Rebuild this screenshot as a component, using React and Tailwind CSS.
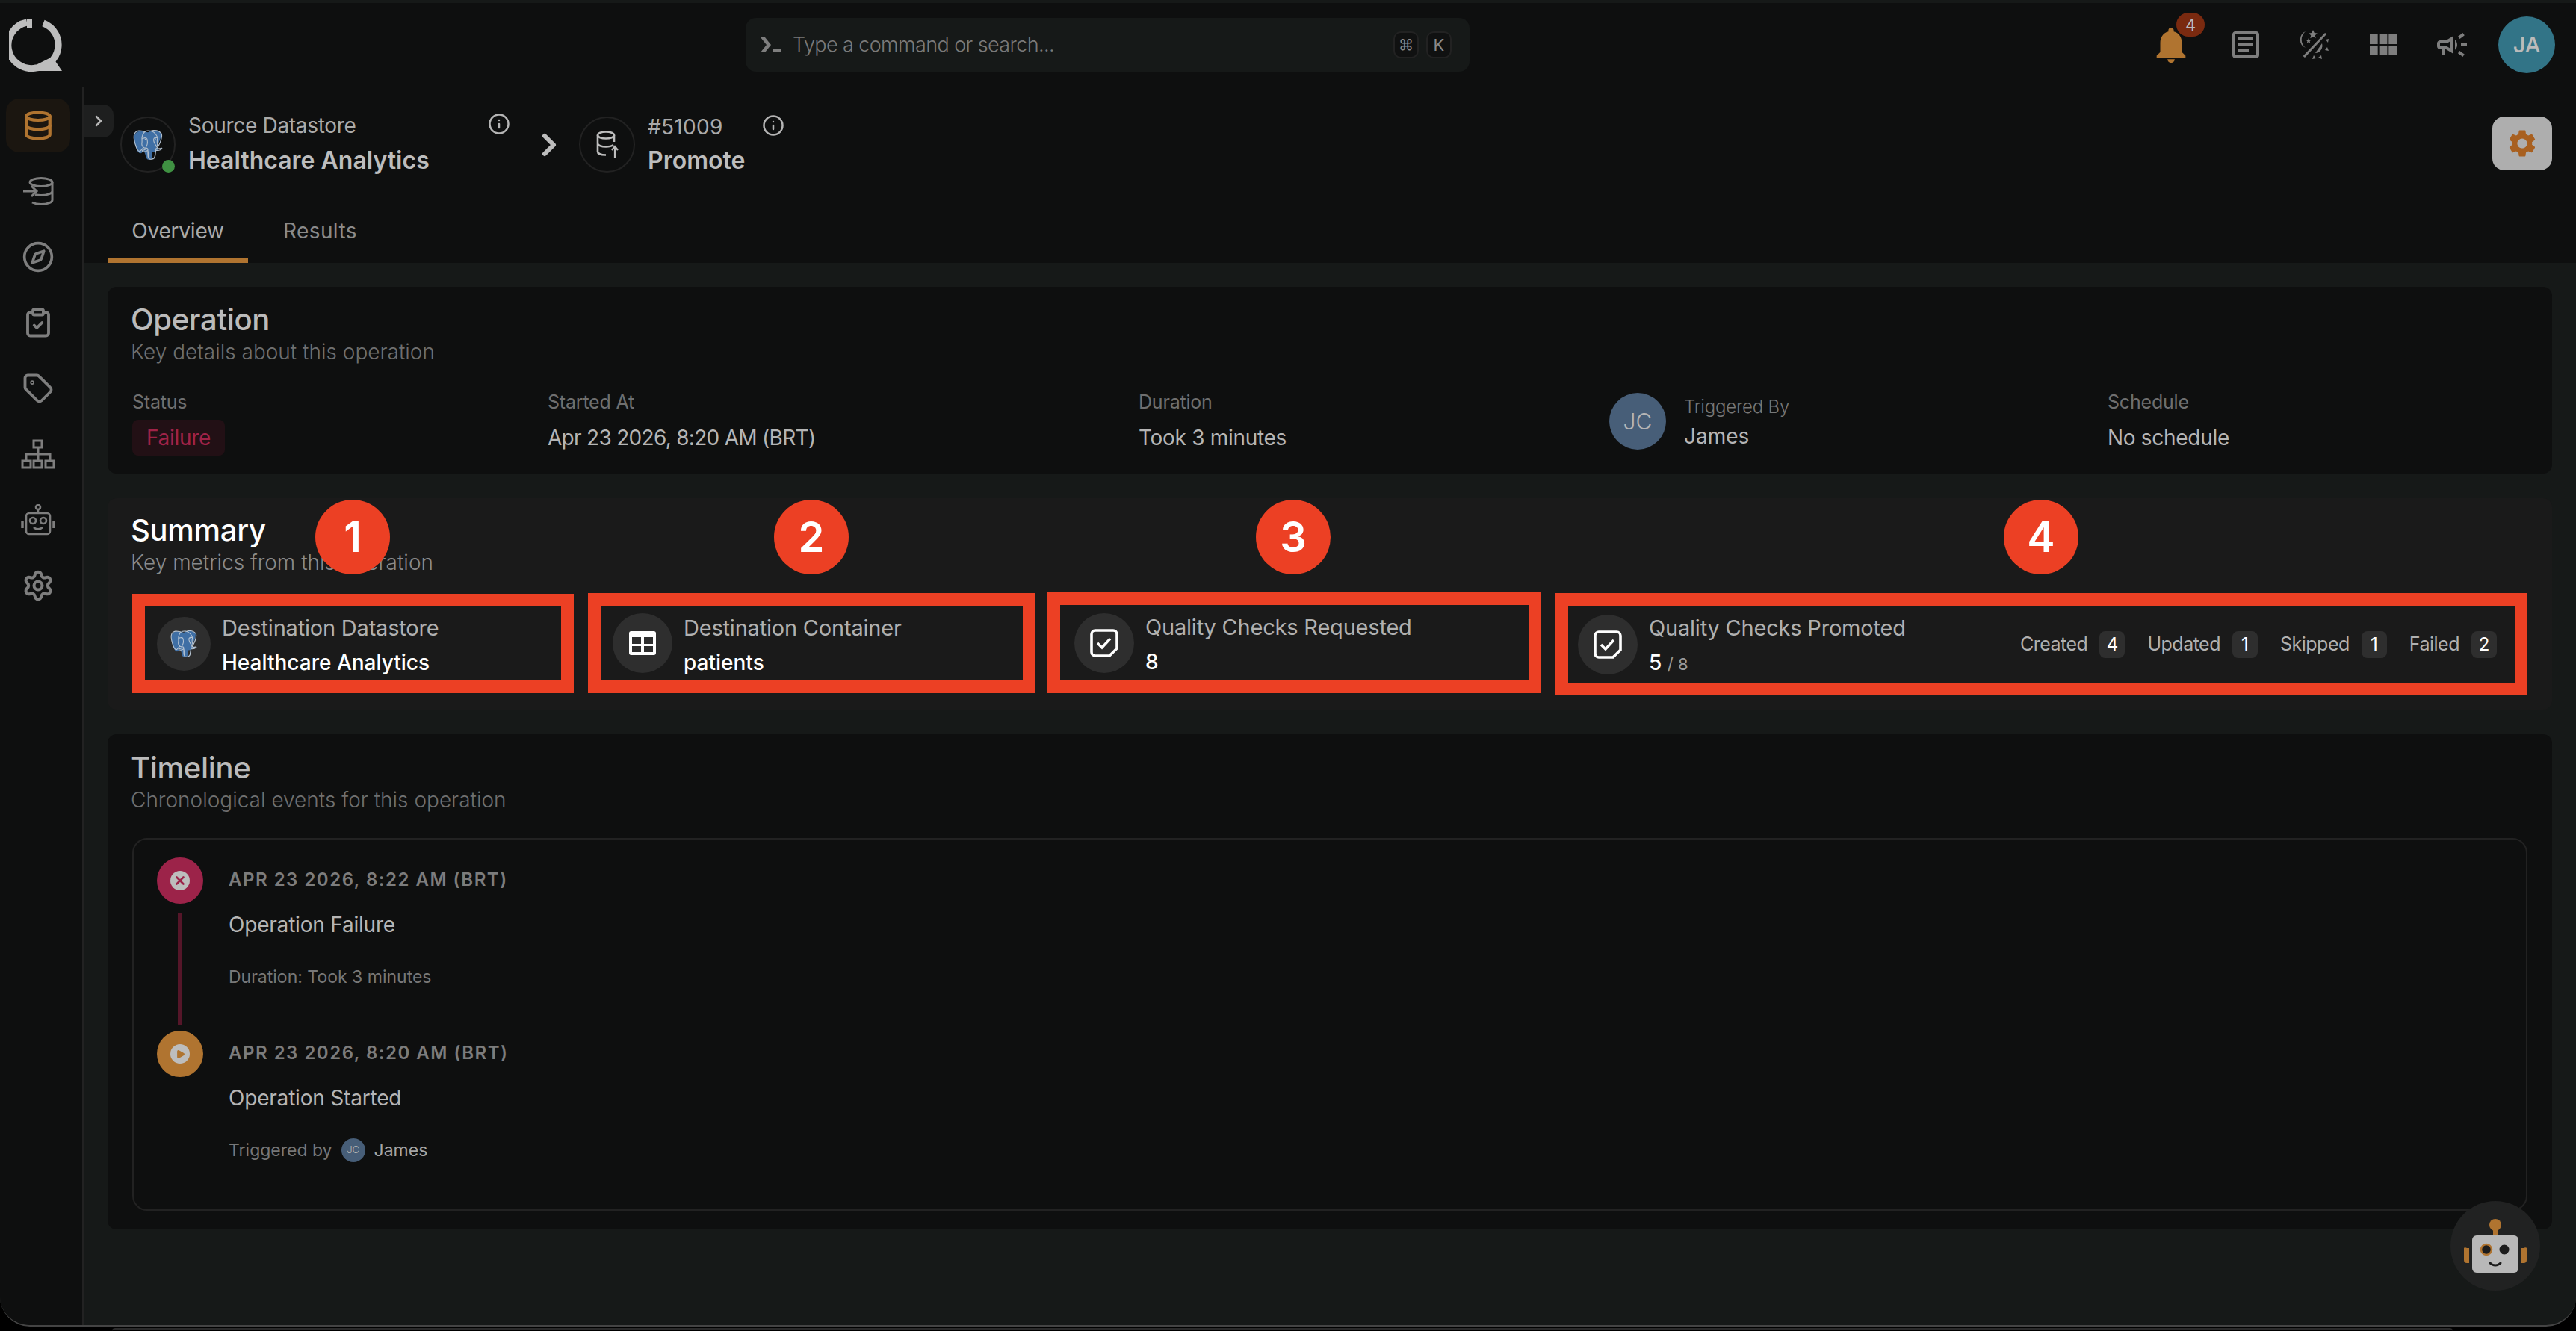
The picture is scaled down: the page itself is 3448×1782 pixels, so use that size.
import { Database, Compass, ClipboardCheck, Tag, Settings, Info, ChevronRight, X, Play } from 'lucide-react'
import { MdNotifications, MdOutlineArticle, MdViewModule, MdOutlineCampaign, MdSettings } from 'react-icons/md'
import { SiPostgresql } from 'react-icons/si'

function QLogo() {
  return (
    <svg width="72" height="72" viewBox="0 0 72 72" fill="none">
      <path d="M24 6 A31 31 0 0 0 36 67 A31 31 0 0 0 46 7" stroke="#bdbdbd" strokeWidth="9" />
      <path d="M24 2 L31 2 L31 13 L24 13Z" fill="#bdbdbd" />
      <path d="M38 62 L58 52 L71 71 L38 71Z" fill="#bdbdbd" />
    </svg>
  )
}

function PgIcon({ size, line }) {
  return (
    <div className="relative" style={{ width: size, height: size }}>
      <svg width={size} height={size} viewBox="0 0 24 24" fill="#3f6fa5">
        <path d="M6 1C2 1 .5 4 1 8c.5 4 2 9 4 10.500 1.500 1 2.500-.5 3.500-2 .5 1 1 2 1.500 3.500.5 3 1.500 4 3 4s2.500-1 2.500-3v-3.500c2 .5 4-.5 5-2 0-1-1-1.500-2-1.500 2-3 4-7 4-10C23 2 20 .5 17 .5c-2 0-3.500.5-5 1.500C10.500 1.300 8 1 6 1z" />
      </svg>
      <SiPostgresql size={size} color={line} className="absolute inset-0" />
    </div>
  )
}

function DbIn() {
  return (
    <svg width="42" height="40" viewBox="0 0 42 40" fill="none" stroke="#7e7e7e" strokeWidth="3">
      <ellipse cx="25" cy="8" rx="15" ry="5.5" />
      <path d="M40 8v24c0 3-7 5.5-15 5.5-5 0-9-1-12-2.5M40 20c0 3-7 5.5-15 5.5-3 0-6-.4-8-1" />
      <path d="M1 20h18M12 13l7 7-7 7" />
    </svg>
  )
}

function DbUp() {
  return (
    <svg width="32" height="40" viewBox="0 0 32 40" fill="none" stroke="#bdbdbd" strokeWidth="2.6">
      <ellipse cx="14" cy="7" rx="11" ry="4.5" />
      <path d="M3 7v22c0 2.500 4 4.500 11 4.500M25 7v9M3 18c0 2.500 5 4.500 11 4.500 4 0 8-1 10-2.500" />
      <path d="M26 37V23M22 27l4-5 4 5" strokeWidth="2.200" />
    </svg>
  )
}

function Hierarchy() {
  return (
    <svg width="46" height="40" viewBox="0 0 46 40" fill="none" stroke="#7e7e7e" strokeWidth="3">
      <rect x="17" y="2" width="11" height="9" />
      <rect x="2" y="29" width="11" height="9" />
      <rect x="17" y="29" width="11" height="9" />
      <rect x="33" y="29" width="11" height="9" />
      <path d="M23 11v18M7 29v-9h32v9" />
    </svg>
  )
}

function NavBot() {
  return (
    <svg width="46" height="42" viewBox="0 0 46 42" fill="none" stroke="#7e7e7e" strokeWidth="2.600">
      <circle cx="23" cy="4" r="3" />
      <path d="M23 7v5" />
      <rect x="7" y="12" width="32" height="28" rx="4" />
      <path d="M2 22v10M44 22v10" strokeWidth="3.500" />
      <circle cx="16" cy="22" r="4" />
      <circle cx="30" cy="22" r="4" />
      <path d="M17 31c3 3 9 3 12 0" />
    </svg>
  )
}

function MoonSun() {
  return (
    <svg width="42" height="42" viewBox="0 0 42 42" fill="#7e7e7e">
      <path d="M9 3 A12 12 0 0 0 9 25 A14 14 0 0 1 9 3Z" />
      <path d="M19 1l1.800 4 4 .4-3 2.800.9 4-3.700-2.100-3.700 2.100.9-4-3-2.800 4-.4z" />
      <path d="M13 12l1 2.400 2.400.2-1.800 1.600.6 2.400-2.200-1.300-2.200 1.300.6-2.400-1.800-1.600 2.400-.2z" />
      <path d="M35 5l2.400 1.600L8 38l-2.400-2z" />
      <path d="M31 19 A10 10 0 0 1 22 32 L31 19Z" />
      <path d="M36 14l4-1-1 5zM40 29l-5-1 3-4zM31 40l-1-5-4 3zM18 40l2-5 3 4z" />
    </svg>
  )
}

function TableIcon() {
  return (
    <svg width="36" height="32" viewBox="0 0 36 32">
      <rect width="36" height="32" rx="3" fill="#fff" />
      <rect x="4" y="8" width="12" height="9" fill="#2e2e2e" />
      <rect x="20" y="8" width="12" height="9" fill="#2e2e2e" />
      <rect x="4" y="20" width="12" height="8" fill="#2e2e2e" />
      <rect x="20" y="20" width="12" height="8" fill="#2e2e2e" />
    </svg>
  )
}

function CheckNote() {
  return (
    <svg width="40" height="40" viewBox="0 0 40 40" fill="none" stroke="#fff" strokeWidth="3.600">
      <path d="M27 37H8a5 5 0 0 1-5-5V8a5 5 0 0 1 5-5h24a5 5 0 0 1 5 5v19z" />
      <path d="M11 20l6 6 11-12" strokeWidth="3.400" />
    </svg>
  )
}

function RobotFab() {
  return (
    <div className="absolute left-[3280px] top-[1608px] w-[120px] h-[120px] rounded-full bg-[#212222] flex items-center justify-center">
      <svg width="84" height="72" viewBox="0 0 84 72">
        <circle cx="42" cy="8" r="8" fill="#b07430" />
        <rect x="39" y="12" width="6" height="10" fill="#b07430" />
        <rect x="11" y="22" width="62" height="50" rx="6" fill="#b8b8b8" />
        <path d="M0 46a4 4 0 0 1 4-7h3v20H4a4 4 0 0 1-4-4z" fill="#b07430" />
        <path d="M84 46a4 4 0 0 0-4-7h-3v20h3a4 4 0 0 0 4-4z" fill="#b07430" />
        <circle cx="30" cy="41" r="7" fill="#1c1c1c" stroke="#b07430" strokeWidth="2.500" />
        <circle cx="54" cy="41" r="6.500" fill="#1c1c1c" />
        <path d="M35 59c4 4 10 4 14 0" fill="none" stroke="#1c1c1c" strokeWidth="3" strokeLinecap="round" />
      </svg>
    </div>
  )
}

function StepBadge({ n, x }) {
  return (
    <div className={`absolute top-[669px] w-[100px] h-[100px] rounded-full bg-[#ec4024] flex items-center justify-center text-white text-[56px] font-semibold ${x}`}>{n}</div>
  )
}

function StatBox({ className, iconSize, icon, label, children, right }) {
  return (
    <div className={`border-[17px] border-[#ec4024] flex items-center pr-[24px] shrink-0 ${className}`}>
      <div className={`rounded-full bg-[#2e2e2e] flex items-center justify-center shrink-0 ${iconSize}`}>{icon}</div>
      <div className="ml-[15px] flex-1 pt-[5px]">
        <div className="text-[29px] leading-[46px] text-[#b0b0b0] tracking-[-0.2px]">{label}</div>
        <div className="text-[28px] leading-[46px] text-white font-medium">{children}</div>
      </div>
      {right}
    </div>
  )
}

function Count({ label, n }) {
  return (
    <div className="flex items-center">
      <span className="text-[25px] text-[#b0b0b0] tracking-[-0.5px]">{label}</span>
      <span className="ml-[16px] w-[34px] h-[36px] rounded-[8px] bg-[#2e2e2e] text-white text-[24px] flex items-center justify-center">{n}</span>
    </div>
  )
}

function CardHead({ title, sub, titleColor, subColor }) {
  return (
    <div className="-ml-[2px]">
      <div className={`text-[40px] leading-[46px] font-medium tracking-[-0.3px] ${titleColor}`}>{title}</div>
      <div className={`text-[28px] leading-[40px] font-light ${subColor}`}>{sub}</div>
    </div>
  )
}

function Field({ label, children }) {
  return (
    <div>
      <div className="text-[25px] leading-[36px] text-[#6f6f6f] tracking-[-0.2px]">{label}</div>
      <div className="mt-[6px] h-[48px] flex items-center text-[28px] text-[#b5b5b5] tracking-[-0.3px]">{children}</div>
    </div>
  )
}

function TimelineItem({ date, dot, line, title, children }) {
  return (
    <div className="flex gap-[34px] h-[232px]">
      <div className="w-[62px] flex flex-col items-center shrink-0">
        <div className={`w-[62px] h-[62px] rounded-full flex items-center justify-center shrink-0 ${dot.bg}`}>{dot.icon}</div>
        {line && <div className="mt-[12px] w-[6px] h-[150px] bg-[#551629]" />}
      </div>
      <div>
        <div className="h-[60px] flex items-center text-[24px] font-semibold tracking-[1.500px] text-[#7c7c7c]">{date}</div>
        <div className="mt-[6px] text-[28px] leading-[48px] text-[#b5b5b5] tracking-[-0.2px]">{title}</div>
        <div className="mt-[24px] h-[44px] flex items-center text-[23px] text-[#777]">{children}</div>
      </div>
    </div>
  )
}

const navIcons = [
  <DbIn key="a" />,
  <Compass key="b" size={44} color="#7e7e7e" strokeWidth={2} />,
  <ClipboardCheck key="c" size={42} color="#7e7e7e" strokeWidth={2.200} />,
  <Tag key="d" size={42} color="#7e7e7e" strokeWidth={2.200} />,
  <Hierarchy key="e" />,
  <NavBot key="f" />,
  <Settings key="g" size={44} color="#7e7e7e" strokeWidth={2.200} />,
]

export default function App() {
  return (
    <div className="relative h-[1782px] bg-black font-[family-name:Inter,sans-serif] overflow-hidden">
      <div className="h-[1776px] rounded-b-[40px] overflow-hidden border-b-2 border-[#444] bg-[#161918] pt-[4px] flex flex-col">
        {/* top bar */}
        <div className="h-[112px] bg-[#0e0f0f] flex items-center shrink-0 relative">
          <div className="ml-[12px] w-[72px]"><QLogo /></div>
          <div className="ml-[914px] w-[969px] h-[72px] rounded-[14px] bg-[#161918] flex items-center pl-[18px] pr-[24px]">
            <svg width="30" height="24" viewBox="0 0 30 24" fill="#7e7e7e"><path d="M2 2h6l8 10-8 10H2l8-10z" /><rect x="18" y="17" width="11" height="5" /></svg>
            <span className="ml-[15px] text-[27px] font-light text-[#7a7a7a] tracking-[-0.6px]">Type a command or search...</span>
            <div className="ml-auto flex gap-[10px]">
              <span className="w-[34px] h-[36px] rounded-[10px] border-2 border-[#222] bg-[#101111] flex items-center justify-center text-[20px] text-[#8a8a8a]">⌘</span>
              <span className="w-[34px] h-[36px] rounded-[10px] border-2 border-[#222] bg-[#101111] flex items-center justify-center text-[22px] text-[#8a8a8a]">K</span>
            </div>
          </div>
          <div className="ml-auto mr-[28px] flex items-center">
            <div className="relative w-[92px] flex justify-center">
              <div className="relative">
                <MdNotifications size={58} color="#b07430" />
                <span className="absolute left-[36px] -top-[14px] w-[38px] h-[32px] rounded-full bg-[#7a2a10] text-[#bbb] text-[22px] flex items-center justify-center">4</span>
              </div>
            </div>
            <div className="ml-[8px] w-[92px] flex justify-center"><MdOutlineArticle size={48} color="#7e7e7e" /></div>
            <div className="w-[92px] flex justify-center"><MoonSun /></div>
            <div className="w-[92px] flex justify-center"><MdViewModule size={48} color="#7e7e7e" /></div>
            <div className="w-[92px] flex justify-center"><MdOutlineCampaign size={48} color="#7e7e7e" /></div>
            <div className="ml-[16px] w-[76px] h-[76px] rounded-full bg-[#327487] flex items-center justify-center text-[#bbb] text-[29px] font-medium">JA</div>
          </div>
        </div>

        <div className="flex-1 flex min-h-0">
          {/* sidebar */}
          <div className="w-[112px] shrink-0 bg-[#0e0f0f] border-r-2 border-[#222] flex flex-col items-center pt-[16px]">
            <div className="w-[86px] h-[72px] rounded-[18px] bg-[#1b1610] flex items-center justify-center mr-[8px]">
              <Database size={42} color="#b07430" strokeWidth={2.400} />
            </div>
            <div className="mt-[8px]">
              {navIcons.map((ic, i) => (
                <div key={i} className="h-[88px] w-[86px] flex items-center justify-center mr-[8px]">{ic}</div>
              ))}
            </div>
          </div>

          <div className="flex-1 min-w-0 flex flex-col">
            {/* page header */}
            <div className="h-[236px] bg-[#0e0f0f] shrink-0 relative">
              <div className="absolute left-0 top-[24px] w-[40px] h-[44px] rounded-r-[14px] bg-[#1e1f1f] flex items-center justify-center">
                <ChevronRight size={24} color="#b5b5b5" strokeWidth={2.500} />
              </div>
              <div className="flex pl-[49px] pt-[40px] pr-[32px] items-start">
                <div className="relative w-[74px] h-[75px] rounded-full border-2 border-[#222] flex items-center justify-center shrink-0">
                  <PgIcon size={40} line="#aebccb" />
                  <span className="absolute left-[54px] top-[56px] w-[17px] h-[17px] rounded-full bg-[#3f9142]" />
                </div>
                <div className="ml-[17px] w-[431px] -mt-[8px]">
                  <div className="text-[28px] leading-[40px] text-[#aaa] tracking-[-0.3px] flex justify-between items-start">
                    Source Datastore
                    <Info size={30} color="#b5b5b5" strokeWidth={2} className="mt-[3px]" />
                  </div>
                  <div className="mt-[5px] text-[32px] leading-[44px] font-semibold text-[#bdbdbd]">Healthcare Analytics</div>
                </div>
                <ChevronRight size={48} color="#bdbdbd" strokeWidth={3} className="ml-[28px] mt-[14px] shrink-0" />
                <div className="ml-[16px] w-[75px] h-[75px] rounded-full border-2 border-[#222] flex items-center justify-center shrink-0"><DbUp /></div>
                <div className="ml-[17px] -mt-[6px]">
                  <div className="text-[28px] leading-[40px] text-[#aaa] tracking-[0.3px] flex items-start">
                    <span className="w-[153px]">#51009</span>
                    <Info size={30} color="#b5b5b5" strokeWidth={2} className="mt-[3px]" />
                  </div>
                  <div className="mt-[3px] text-[32px] leading-[44px] font-semibold text-[#bdbdbd]">Promote</div>
                </div>
                <div className="ml-auto w-[80px] h-[72px] rounded-[16px] bg-[#aeaeae] flex items-center justify-center">
                  <MdSettings size={44} color="#a86020" />
                </div>
              </div>
              <div className="absolute left-[32px] bottom-0 flex text-[28px] tracking-[-0.2px]">
                <div className="w-[188px] h-[64px] text-center text-[#aaa] border-b-[6px] border-[#b07430]">Overview</div>
                <div className="ml-[47px] h-[64px] text-[#8a8a8a] tracking-[0.4px]">Results</div>
              </div>
            </div>

            {/* content */}
            <div className="flex-1 pl-[32px] pr-[32px] pt-[32px] flex flex-col gap-[33px]">
              <div className="h-[250px] rounded-[12px] bg-[#0e0f0f] pl-[33px] pt-[21px]">
                <CardHead title="Operation" sub="Key details about this operation" titleColor="text-[#bbb]" subColor="text-[#6f6f6f]" />
                <div className="mt-[29px] grid grid-cols-[556px_791px_630px_667px_1fr]">
                  <Field label="Status">
                    <span className="h-[48px] px-[19px] rounded-[8px] bg-[#221015] text-[#a02348] flex items-center">Failure</span>
                  </Field>
                  <Field label="Started At"><span className="tracking-[-0.7px]">Apr 23 2026, 8:20 AM (BRT)</span></Field>
                  <Field label="Duration">Took 3 minutes</Field>
                  <div className="flex items-center -mt-[2px]">
                    <div className="w-[76px] h-[76px] rounded-full bg-[#475e78] flex items-center justify-center text-[#b5b5b5] text-[30px] font-light">JC</div>
                    <div className="ml-[24px] mt-[4px]">
                      <div className="text-[24px] leading-[36px] font-light text-[#777] tracking-[-0.2px]">Triggered By</div>
                      <div className="text-[28px] leading-[42px] text-[#b5b5b5]">James</div>
                    </div>
                  </div>
                  <Field label="Schedule">No schedule</Field>
                </div>
              </div>

              <div className="h-[283px] rounded-[12px] bg-[#1a1a1a] pl-[33px] pt-[20px]">
                <CardHead title="Summary" sub="Key metrics from this operation" titleColor="text-white" subColor="text-[#8a8a8a]" />
                <div className="mt-[20px] flex items-start gap-[19px]">
                  <StatBox className="w-[591px] h-[133px] mt-[2px] pl-[16px]" iconSize="w-[72px] h-[72px]" icon={<PgIcon size={36} line="#b6c4d3" />} label="Destination Datastore">Healthcare Analytics</StatBox>
                  <StatBox className="w-[599px] h-[134px] mt-[1px] pl-[16px]" iconSize="w-[80px] h-[80px]" icon={<TableIcon />} label="Destination Container">patients</StatBox>
                  <StatBox className="w-[661px] h-[135px] -ml-[3px] pl-[19px]" iconSize="w-[80px] h-[80px]" icon={<CheckNote />} label="Quality Checks Requested">8</StatBox>
                  <StatBox
                    className="w-[1301px] h-[137px] mt-[1px] pl-[13px]"
                    iconSize="w-[80px] h-[80px]"
                    icon={<CheckNote />}
                    label="Quality Checks Promoted"
                    right={
                      <div className="flex items-center gap-[30px]">
                        <Count label="Created" n="4" />
                        <Count label="Updated" n="1" />
                        <Count label="Skipped" n="1" />
                        <Count label="Failed" n="2" />
                      </div>
                    }
                  >
                    5 <span className="text-[22px] text-[#9a9a9a] font-normal">/ 8</span>
                  </StatBox>
                </div>
              </div>

              <div className="h-[663px] rounded-[12px] bg-[#0e0f0f] pl-[33px] pr-[33px] pt-[22px]">
                <CardHead title="Timeline" sub="Chronological events for this operation" titleColor="text-[#bbb]" subColor="text-[#6f6f6f]" />
                <div className="mt-[31px] h-[499px] rounded-[20px] border-2 border-[#222] pl-[31px] pt-[24px]">
                  <TimelineItem
                    date="APR 23 2026, 8:22 AM (BRT)"
                    line
                    title="Operation Failure"
                    dot={{ bg: 'bg-[#9c2349]', icon: <span className="w-[26px] h-[26px] rounded-full bg-[#bdbdbd] flex items-center justify-center"><X size={18} color="#9c2349" strokeWidth={3.500} /></span> }}
                  >
                    Duration: Took 3 minutes
                  </TimelineItem>
                  <TimelineItem
                    date="APR 23 2026, 8:20 AM (BRT)"
                    title="Operation Started"
                    dot={{ bg: 'bg-[#b07430]', icon: <span className="w-[26px] h-[26px] rounded-full bg-[#bdbdbd] flex items-center justify-center"><Play size={13} color="#b07430" fill="#b07430" /></span> }}
                  >
                    Triggered by
                    <span className="ml-[12px] w-[32px] h-[32px] rounded-full bg-[#475e78] flex items-center justify-center text-[13px] text-[#b5b5b5] font-light">JC</span>
                    <span className="ml-[12px] text-[#a5a5a5]">James</span>
                  </TimelineItem>
                </div>
              </div>
            </div>
          </div>
        </div>
      </div>

      <div className="ml-[150px] mr-[165px] mt-[2px] h-[4px] rounded-t-[14px] border-t-2 border-[#2a2a2a]" />

      <StepBadge n="1" x="left-[422px]" />
      <StepBadge n="2" x="left-[1036px]" />
      <StepBadge n="3" x="left-[1681px]" />
      <StepBadge n="4" x="left-[2682px]" />
      <RobotFab />
    </div>
  )
}
